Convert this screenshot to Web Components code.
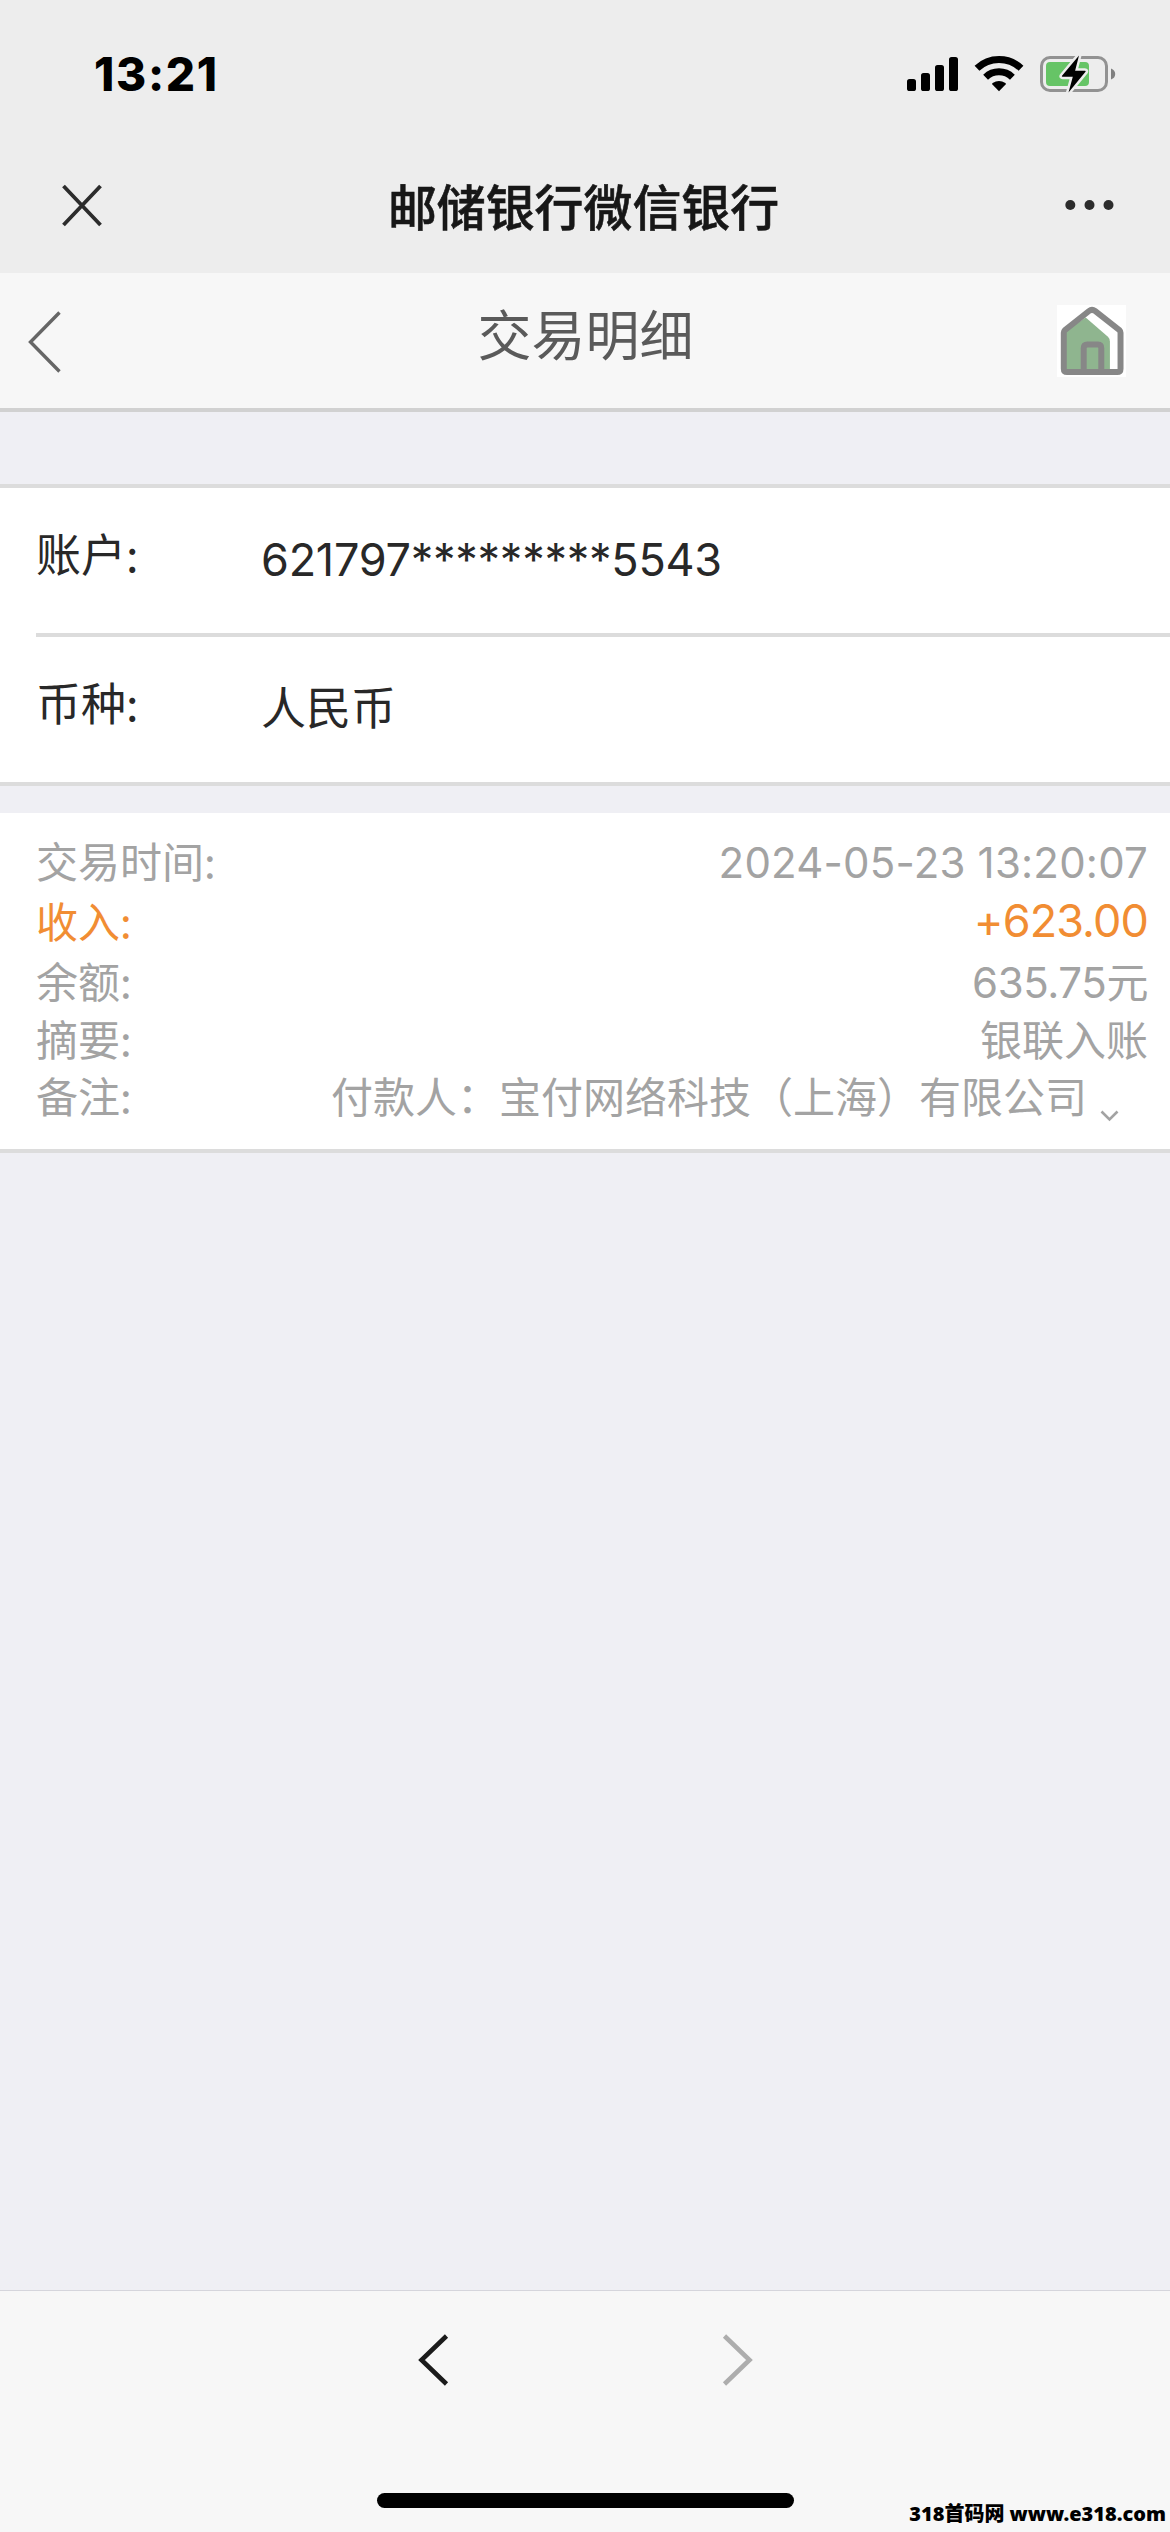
<!DOCTYPE html>
<html lang="zh-CN">
<head>
<meta charset="utf-8">
<title>交易明细</title>
<style>
  body {
    background: #efeff4;
    font-family: 'Noto Sans CJK SC', sans-serif;
    margin: 0;
  }
</style>
</head>
<body>
<bank-screen>
  <bank-status slot="top">13:21</bank-status>
  <bank-titlebar slot="top">邮储银行微信银行</bank-titlebar>
  <bank-navbar slot="top">交易明细</bank-navbar>
  <bank-card>
    <bank-field label="账户:" numeric>621797*********5543</bank-field>
    <bank-field label="币种:">人民币</bank-field>
  </bank-card>
  <bank-record>
    <bank-entry label="交易时间:" kind="date">2024-05-23 13:20:07</bank-entry>
    <bank-entry label="收入:" kind="income">+623.00</bank-entry>
    <bank-entry label="余额:" kind="balance">635.75元</bank-entry>
    <bank-entry label="摘要:">银联入账</bank-entry>
    <bank-entry label="备注:" expandable>付款人：宝付网络科技（上海）有限公司</bank-entry>
  </bank-record>
  <bank-toolbar slot="bottom">318首码网 www.e318.com</bank-toolbar>
</bank-screen>

<script>
class BankElement extends HTMLElement {
  constructor( html ) {
    super();

    const template = document.createElement( 'template' );
    template.innerHTML = html;

    this.attachShadow( {mode: 'open'} );
    this.shadowRoot.appendChild( template.content.cloneNode( true ) );
  }
}

// Page frame
class BankScreen extends BankElement {
  constructor() {
    super( /* template */ `
      <style>
        :host {
          display: flex;
          flex-direction: column;
          height: 2532px;
          overflow: hidden;
          width: 1170px;
        }

        main {
          flex: 1;
          padding-top: 72px;
        }
      </style>
      <slot name="top"></slot>
      <main><slot></slot></main>
      <slot name="bottom"></slot>
    ` );
  }
}

// Clock, signal, wifi, battery
class BankStatus extends BankElement {
  constructor() {
    super( /* template */ `
      <style>
        :host {
          align-items: center;
          background: #ededed;
          box-sizing: border-box;
          color: #000000;
          display: flex;
          font-family: Inter, sans-serif;
          font-size: 46px;
          font-weight: 800;
          height: 148px;
          justify-content: space-between;
          letter-spacing: 1.7px;
          padding: 0 53px 0 94px;
        }

        svg {
          display: block;
        }
      </style>
      <span><slot></slot></span>
      <svg width="212" height="40" viewBox="905 54 212 40">
        <rect x="907" y="79" width="9" height="12" rx="2.6"/>
        <rect x="921" y="73" width="9" height="18" rx="2.6"/>
        <rect x="935" y="65" width="9" height="26" rx="2.6"/>
        <rect x="949" y="57" width="9" height="34" rx="2.6"/>
        <g fill="none" stroke="#000000" stroke-width="7">
          <path d="M977 68.2a32 32 0 0 1 44 0"/>
          <path d="M985.6 77.2a19.5 19.5 0 0 1 26.8 0"/>
        </g>
        <path d="M999 91.2l-6.6-6.7q-.8-.9.2-1.6q6.4-4 12.8 0q1 .7.2 1.6z"/>
        <rect x="1041.5" y="57.500" width="65" height="33" rx="8.500" fill="none" stroke="#929292" stroke-width="3"/>
        <path d="M1111 68.500q4.200 1.500 4.200 5.500t-4.200 5.500z" fill="#808080"/>
        <rect x="1046" y="62" width="43" height="24" rx="4" fill="#66c466"/>
        <path d="M1079 55.500L1062 75.800q-.6 1 .6 1h10.200L1068.500 92.500L1085.500 71.800q.7-1.100-.6-1.100h-9.800z" stroke="#ededed" stroke-width="5" stroke-linejoin="round"/>
        <path d="M1079 55.500L1062 75.800q-.6 1 .6 1h10.200L1068.500 92.500L1085.500 71.800q.7-1.100-.6-1.100h-9.800z"/>
      </svg>
    ` );
  }
}

class BankTitlebar extends BankElement {
  constructor() {
    super( /* template */ `
      <style>
        :host {
          align-items: center;
          background: #ededed;
          box-sizing: border-box;
          color: #171717;
          display: flex;
          font-size: 48.900px;
          font-weight: 500;
          height: 125px;
          justify-content: space-between;
          line-height: 60px;
          padding: 0 55px 13px 61px;
        }

        span {
          -webkit-text-stroke: 0.6px #171717;
          padding: 1px 0 0 1px;
        }

        svg {
          display: block;
          margin-top: 2px;
        }
      </style>
      <svg width="42" height="46" viewBox="61 182 42 46">
        <path d="M63.500 186L100.500 225M100.500 186L63.500 225" stroke="#2c2c2c" stroke-width="3.800"/>
      </svg>
      <span><slot></slot></span>
      <svg width="52" height="14" viewBox="1063 199 52 14" fill="#2c2c2c">
        <circle cx="1070.300" cy="206" r="5"/>
        <circle cx="1089.500" cy="206" r="5"/>
        <circle cx="1108.500" cy="206" r="5"/>
      </svg>
    ` );
  }
}

class BankNavbar extends BankElement {
  constructor() {
    super( /* template */ `
      <style>
        :host {
          align-items: center;
          background: #f7f7f7;
          border-bottom: 4px solid #d1d1d1;
          box-sizing: border-box;
          color: #5a5a5a;
          display: grid;
          font-size: 54px;
          grid-template-columns: 114px 1fr 113px;
          height: 139px;
          line-height: 60px;
          text-align: center;
        }

        span {
          margin-bottom: 15px;
        }

        svg {
          display: block;
        }

        .home {
          background: #ffffff;
        }
      </style>
      <svg width="113" height="64" viewBox="0 309 113 64">
        <path d="M59.500 312.500L30.500 342L59.500 371.500" fill="none" stroke="#666666" stroke-width="3.400"/>
      </svg>
      <span><slot></slot></span>
      <svg class="home" width="69" height="72" viewBox="51 44 207 217">
        <path d="M137 82L204 140q6 6 6 14V246H71V127z" fill="#8fb58f"/>
        <path d="M71 128q0-5 4-9L147 62q9-7 18 0L238 119q4 4 4 9V236q0 10-10 10H81q-10 0-10-10z" fill="none" stroke="#878787" stroke-width="18"/>
        <path d="M131 246V174q0-11 11-11H174q10 0 10 11V246" fill="none" stroke="#878787" stroke-width="18"/>
      </svg>
    ` );
  }
}

class BankCard extends BankElement {
  constructor() {
    super( /* template */ `
      <style>
        :host {
          background: #ffffff;
          border-bottom: 4px solid #dcdcdc;
          border-top: 4px solid #dcdcdc;
          display: block;
          margin-bottom: 27px;
          padding-left: 36px;
        }

        ::slotted( bank-field:not( :last-child ) ) {
          border-bottom: 4px solid #dcdcdc;
        }
      </style>
      <slot></slot>
    ` );
  }
}

class BankField extends BankElement {
  constructor() {
    super( /* template */ `
      <style>
        :host {
          color: #282828;
          display: grid;
          font-size: 45px;
          grid-template-columns: 225px 1fr;
          height: 145px;
          line-height: 60px;
        }

        .label {
          padding-top: 35px;
        }

        .value {
          padding-top: 39px;
        }

        :host( [numeric] ) .value {
          font-family: Inter, sans-serif;
          letter-spacing: -0.25px;
          padding-top: 42px;
        }
      </style>
      <span class="label"></span>
      <span class="value"><slot></slot></span>
    ` );
  }

  connectedCallback() {
    this.shadowRoot.querySelector( '.label' ).textContent = this.getAttribute( 'label' );
  }
}

class BankRecord extends BankElement {
  constructor() {
    super( /* template */ `
      <style>
        :host {
          background: #ffffff;
          border-bottom: 4px solid #dcdcdc;
          box-sizing: border-box;
          display: block;
          height: 340px;
          padding: 17px 22px 0 36px;
        }
      </style>
      <slot></slot>
    ` );
  }
}

class BankEntry extends BankElement {
  constructor() {
    super( /* template */ `
      <style>
        :host {
          color: #a3a3a3;
          display: flex;
          font-size: 42px;
          height: 57px;
          justify-content: space-between;
          line-height: 57px;
          white-space: nowrap;
        }

        :host( [kind] ) {
          height: 60px;
          line-height: 60px;
        }

        :host( [kind] ) .value {
          font-family: Inter, 'Noto Sans CJK SC', sans-serif;
          padding-top: 3px;
        }

        :host( [kind=date] ) .value {
          letter-spacing: 0.2px;
        }

        :host( [kind=income] ) {
          color: #f18d33;
        }

        :host( [kind=income] ) .value {
          font-size: 45px;
          letter-spacing: -0.9px;
          padding-top: 1px;
        }

        :host( [kind=balance] ) {
          height: 59px;
          line-height: 59px;
        }

        :host( [kind=balance] ) .value {
          letter-spacing: -0.4px;
        }

        svg {
          display: none;
        }

        :host( [expandable] ) svg {
          display: inline;
          margin: 0 28px 0 12px;
          vertical-align: -10px;
        }
      </style>
      <span class="label"></span>
      <span class="value"><slot></slot><svg width="21" height="14" viewBox="0 0 21 14"><path d="M2.500 2.500L10.500 10.500L18.500 2.500" fill="none" stroke="#a3a3a3" stroke-width="2.600"/></svg></span>
    ` );
  }

  connectedCallback() {
    this.shadowRoot.querySelector( '.label' ).textContent = this.getAttribute( 'label' );
  }
}

// History arrows and home indicator
class BankToolbar extends BankElement {
  constructor() {
    super( /* template */ `
      <style>
        :host {
          background: #f7f7f7;
          border-top: 1px solid #d5d5dc;
          box-sizing: border-box;
          display: block;
          height: 242px;
          position: relative;
        }

        nav {
          display: flex;
          gap: 271px;
          justify-content: center;
          padding-top: 41px;
        }

        svg {
          display: block;
        }

        .indicator {
          background: #000000;
          border-radius: 8px;
          height: 15px;
          margin: 105px auto 0;
          width: 417px;
        }

        .mark {
          bottom: 3px;
          color: #000000;
          font-family: 'Noto Sans', 'Noto Sans CJK SC', sans-serif;
          font-size: 20px;
          font-weight: 900;
          line-height: 30px;
          position: absolute;
          right: 4px;
          white-space: nowrap;
        }
      </style>
      <nav>
        <svg width="33" height="56" viewBox="0 0 33 56"><path d="M29.500 4L4.500 28L29.500 52" fill="none" stroke="#1b1b1b" stroke-width="4.600"/></svg>
        <svg width="33" height="56" viewBox="0 0 33 56"><path d="M3.500 4L28.500 28L3.500 52" fill="none" stroke="#adadad" stroke-width="4.600"/></svg>
      </nav>
      <div class="indicator"></div>
      <span class="mark"><slot></slot></span>
    ` );
  }
}

window.customElements.define( 'bank-screen', BankScreen );
window.customElements.define( 'bank-status', BankStatus );
window.customElements.define( 'bank-titlebar', BankTitlebar );
window.customElements.define( 'bank-navbar', BankNavbar );
window.customElements.define( 'bank-card', BankCard );
window.customElements.define( 'bank-field', BankField );
window.customElements.define( 'bank-record', BankRecord );
window.customElements.define( 'bank-entry', BankEntry );
window.customElements.define( 'bank-toolbar', BankToolbar );
</script>
</body>
</html>
